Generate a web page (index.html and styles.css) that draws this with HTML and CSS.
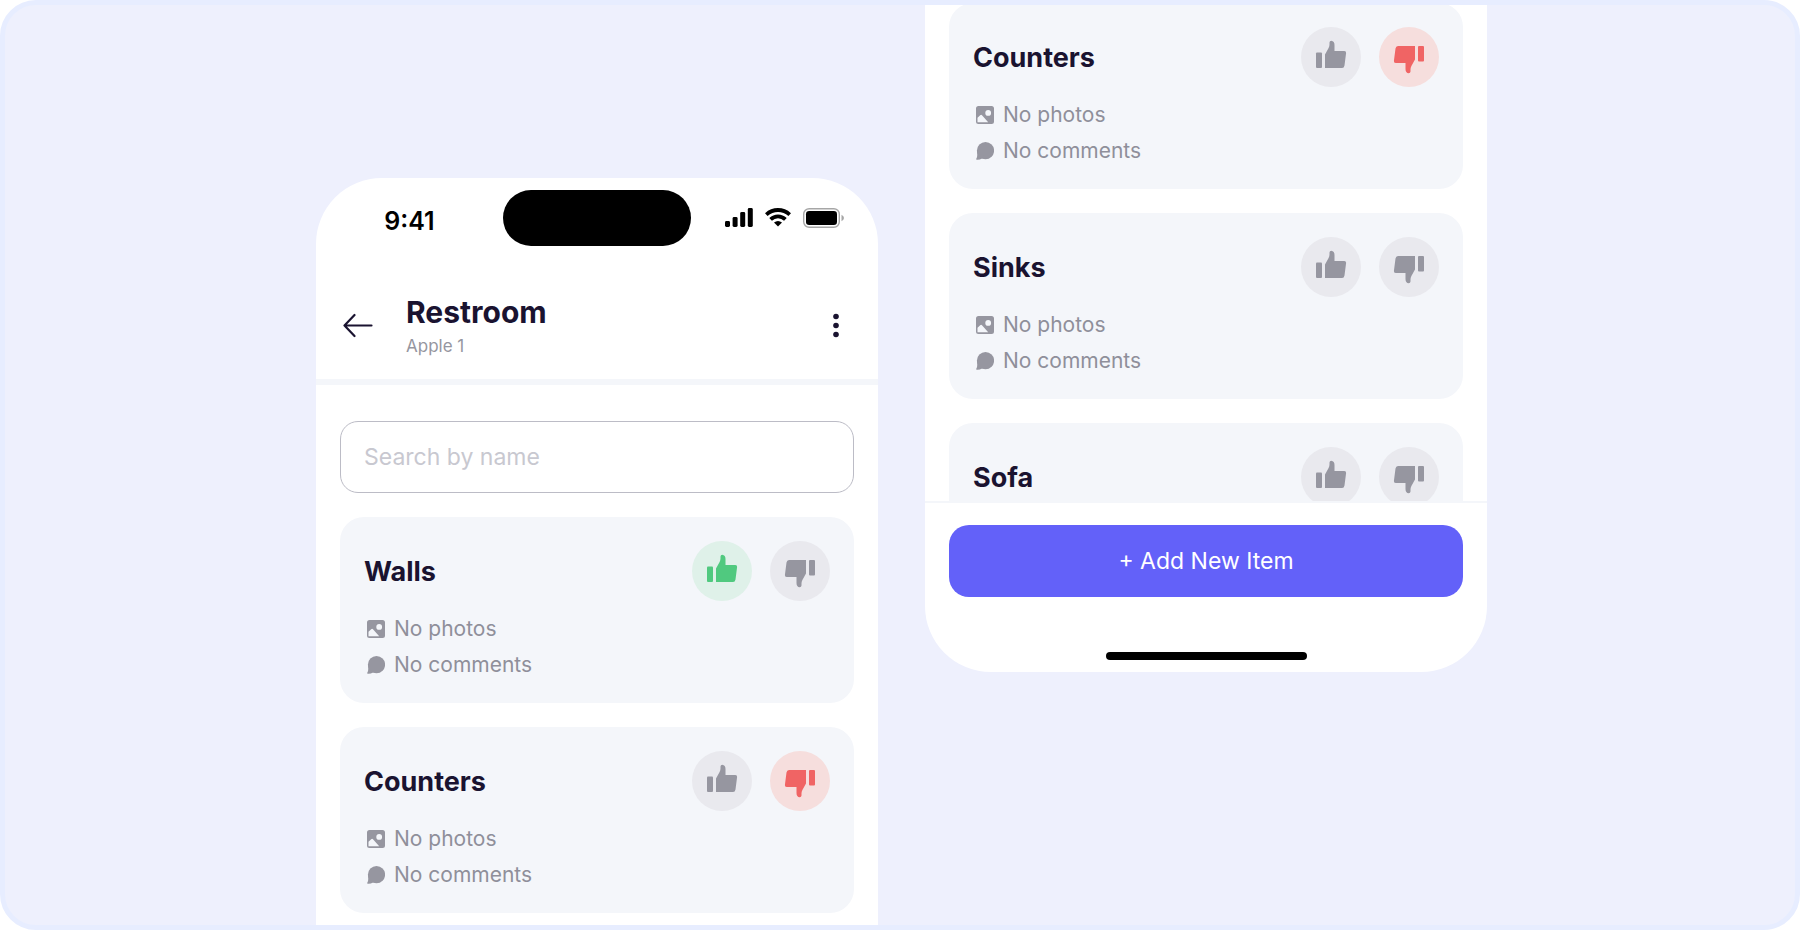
FILE: index.html
```html
<!DOCTYPE html>
<html lang="en">
<head>
    <meta charset="UTF-8">
    <meta name="viewport" content="width=device-width, initial-scale=1.0">
    <title>Restroom</title>
    <link rel="stylesheet" href="styles.css">
</head>
<body>

    <!-- Icons -->
    <svg class="sprite" aria-hidden="true">
        <symbol id="thumb" viewBox="0 0 60 60">
            <rect x="15" y="25.5" width="6" height="15.5" rx="1"/>
            <path d="M24 41V27.5L27.6 21Q28.5 19.3 28.5 17.5V15.5Q28.6 13.7 30.3 13.7Q33.5 14 33.5 18V24H43.3Q45.3 24 45.1 26L43.5 38.5Q43.1 41 41 41Z"/>
        </symbol>
        <symbol id="photo" viewBox="0 0 18 18">
            <path fill-rule="evenodd" d="M2.5 0H15.5Q18 0 18 2.5V15.5Q18 18 15.5 18H2.5Q0 18 0 15.5V2.5Q0 0 2.5 0ZM12.2 4A2.9 2.9 0 1 0 12.2 9.8A2.9 2.9 0 1 0 12.2 4ZM1.5 16.3H12.2L6.2 9.4Q5.2 8.4 4.2 9.2L1.5 11.8Z"/>
        </symbol>
        <symbol id="comment" viewBox="0 0 18 18">
            <circle cx="9.5" cy="8.7" r="8.6"/>
            <path d="M1 9Q1.800 14.500 .3 16.800Q-.1 17.700 .8 17.800Q3.800 18 6 16.500L9 9Z"/>
        </symbol>
    </svg>

    <div class="frame">

        <div class="phone phone-top">
            <div class="status-bar">
                <div class="status-side time">9:41</div>
                <div class="island"></div>
                <div class="status-side">
                    <svg width="28" height="20" viewBox="0 0 28 20">
                        <rect x="0" y="13" width="5" height="6" rx="1.4"/>
                        <rect x="7.6" y="9" width="5" height="10" rx="1.4"/>
                        <rect x="15.2" y="4" width="5" height="15" rx="1.4"/>
                        <rect x="22.8" y="0" width="5" height="19" rx="1.4"/>
                    </svg>
                    <svg width="26" height="20" viewBox="0 0 26 20">
                        <path fill="none" stroke="#000" stroke-width="3.8" d="M1.3 6.6Q6.4 2 13 2T24.7 6.6M5.6 11.4Q8.8 8.3 13 8.3T20.4 11.4"/>
                        <path d="M13 18.5L9 14.5Q13 11.5 17 14.5Z"/>
                    </svg>
                    <svg width="41" height="20" viewBox="0 0 41 20">
                        <rect x=".7" y=".7" width="35.6" height="18.6" rx="5.5" fill="none" stroke="#a6a6a6" stroke-width="1.4"/>
                        <rect x="3" y="3" width="31" height="14" rx="3.2"/>
                        <path fill="#a6a6a6" d="M38.5 6.8Q41 8 41 10T38.5 13.2Z"/>
                    </svg>
                </div>
            </div>

            <div class="header">
                <button type="button" class="icon-button" aria-label="Back">
                    <svg width="30" height="28" viewBox="0 0 30 28">
                        <path fill="none" stroke="#1a1330" stroke-width="2.2" stroke-linecap="round" stroke-linejoin="round" d="M11.5 4L1.500 14.500L11.500 25M1.500 14.500H28.500"/>
                    </svg>
                </button>
                <div class="header-text">
                    <h1>Restroom</h1>
                    <p>Apple 1</p>
                </div>
                <button type="button" class="icon-button" aria-label="Menu">
                    <svg width="6" height="26" viewBox="0 0 6 26">
                        <circle cx="3" cy="4.5" r="2.8"/>
                        <circle cx="3" cy="13.5" r="2.8"/>
                        <circle cx="3" cy="22.5" r="2.8"/>
                    </svg>
                </button>
            </div>

            <div class="content">
                <input type="text" class="search" placeholder="Search by name" aria-label="Search by name">

                <div class="card">
                    <div class="card-head">
                        <h2>Walls</h2>
                        <button type="button" class="vote good" aria-label="Good"><svg><use href="#thumb"/></svg></button>
                        <button type="button" class="vote down" aria-label="Bad"><svg><use href="#thumb"/></svg></button>
                    </div>
                    <p class="note"><svg><use href="#photo"/></svg>No photos</p>
                    <p class="note"><svg><use href="#comment"/></svg>No comments</p>
                </div>

                <div class="card">
                    <div class="card-head">
                        <h2>Counters</h2>
                        <button type="button" class="vote" aria-label="Good"><svg><use href="#thumb"/></svg></button>
                        <button type="button" class="vote down bad" aria-label="Bad"><svg><use href="#thumb"/></svg></button>
                    </div>
                    <p class="note"><svg><use href="#photo"/></svg>No photos</p>
                    <p class="note"><svg><use href="#comment"/></svg>No comments</p>
                </div>
            </div>
        </div>

        <div class="phone phone-bottom">
            <div class="scroll-list">
                <div class="card">
                    <div class="card-head">
                        <h2>Counters</h2>
                        <button type="button" class="vote" aria-label="Good"><svg><use href="#thumb"/></svg></button>
                        <button type="button" class="vote down bad" aria-label="Bad"><svg><use href="#thumb"/></svg></button>
                    </div>
                    <p class="note"><svg><use href="#photo"/></svg>No photos</p>
                    <p class="note"><svg><use href="#comment"/></svg>No comments</p>
                </div>

                <div class="card">
                    <div class="card-head">
                        <h2>Sinks</h2>
                        <button type="button" class="vote" aria-label="Good"><svg><use href="#thumb"/></svg></button>
                        <button type="button" class="vote down" aria-label="Bad"><svg><use href="#thumb"/></svg></button>
                    </div>
                    <p class="note"><svg><use href="#photo"/></svg>No photos</p>
                    <p class="note"><svg><use href="#comment"/></svg>No comments</p>
                </div>

                <div class="card">
                    <div class="card-head">
                        <h2>Sofa</h2>
                        <button type="button" class="vote" aria-label="Good"><svg><use href="#thumb"/></svg></button>
                        <button type="button" class="vote down" aria-label="Bad"><svg><use href="#thumb"/></svg></button>
                    </div>
                </div>
            </div>

            <div class="footer">
                <button type="button" class="add-button">+ Add New Item</button>
                <div class="home-bar"></div>
            </div>
        </div>

    </div>

</body>
</html>
```
FILE: styles.css
```css
* {
    box-sizing: border-box;
}
body {
    margin: 0;
    background-color: #fff;
    font-family: Inter, "Noto Sans", sans-serif;
    color: #1a1330;
}
h1, h2, p {
    margin: 0;
}
button {
    border: none;
    padding: 0;
    font-family: inherit;
    cursor: pointer;
}
svg {
    display: block;
}
.sprite {
    display: none;
}
.frame {
    display: flex;
    justify-content: center;
    align-items: flex-start;
    gap: 47px;
    height: 100vh;
    padding-left: 3px;
    border: 5px solid #e7edff;
    border-radius: 36px;
    background-color: #eef0fd;
    overflow: hidden;
}
.phone {
    width: 100%;
    max-width: 562px;
    background-color: #fff;
    overflow: hidden;
}
.phone-top {
    margin-top: 173px;
    border-radius: 66px 66px 0 0;
}
.phone-bottom {
    border-radius: 0 0 66px 66px;
}

/* Status bar */
.status-bar {
    display: flex;
    padding: 12px 0 25px;
}
.island {
    width: 188px;
    height: 56px;
    border-radius: 28px;
    background-color: #000;
}
.status-side {
    flex: 1;
    display: flex;
    justify-content: center;
    align-items: center;
    gap: 12px;
}
.time {
    padding-top: 5px;
    font-size: 25px;
    font-weight: 600;
    color: #000;
}

/* Header */
.header {
    display: flex;
    align-items: center;
    height: 114px;
    padding: 0 39px 0 27px;
    border-bottom: 6px solid #f4f6fa;
}
.icon-button {
    background: none;
    color: #1a1330;
}
.icon-button svg {
    fill: currentColor;
}
.header-text {
    flex: 1;
    padding: 2px 0 0 33px;
}
.header-text h1 {
    font-size: 30px;
    line-height: 36px;
    font-weight: 700;
}
.header-text p {
    margin-top: 4px;
    font-size: 17px;
    line-height: 24px;
    color: #9696a0;
}

.content {
    display: flex;
    flex-direction: column;
    gap: 24px;
    padding: 36px 24px 24px;
}
.search {
    width: 100%;
    height: 72px;
    padding: 0 23px;
    border: 1px solid #bcbcc6;
    border-radius: 18px;
    background-color: #fff;
    font-family: inherit;
    font-size: 23px;
    color: #1a1330;
}
.search::placeholder {
    color: #c8c8d0;
    opacity: 1;
}

/* Cards */
.card {
    flex-shrink: 0;
    padding: 24px 24px 20px;
    border-radius: 24px;
    background-color: #f4f6fa;
}
.card-head {
    display: flex;
    align-items: center;
    gap: 18px;
    margin-bottom: 10px;
}
.card-head h2 {
    flex: 1;
    font-size: 27px;
    font-weight: 700;
}
.vote {
    width: 60px;
    height: 60px;
    border-radius: 50%;
    background-color: #e9e9ee;
    color: #9696a0;
}
.vote svg {
    width: 60px;
    height: 60px;
    fill: currentColor;
}
.vote.down svg {
    transform: rotate(180deg);
}
.vote.good {
    background-color: #dff1e9;
    color: #50c97f;
}
.vote.bad {
    background-color: #f6dedd;
    color: #f06464;
}
.note {
    display: flex;
    align-items: center;
    gap: 9px;
    padding-left: 3px;
    font-size: 21px;
    line-height: 36px;
    color: #8f8f9a;
}
.note svg {
    width: 18px;
    height: 18px;
    fill: #9696a0;
}

/* Second screen, list is scrolled under the footer */
.scroll-list {
    display: flex;
    flex-direction: column;
    gap: 24px;
    height: 498px;
    margin-top: -2px;
    padding: 0 24px;
    overflow: hidden;
}
.footer {
    padding: 22px 24px 12px;
    border-top: 2px solid #f4f6fa;
}
.add-button {
    display: block;
    width: 100%;
    height: 72px;
    border-radius: 20px;
    background-color: #6361f9;
    color: #fff;
    font-size: 23px;
}
.home-bar {
    width: 201px;
    height: 8px;
    margin: 55px auto 0;
    border-radius: 4px;
    background-color: #000;
}
```
